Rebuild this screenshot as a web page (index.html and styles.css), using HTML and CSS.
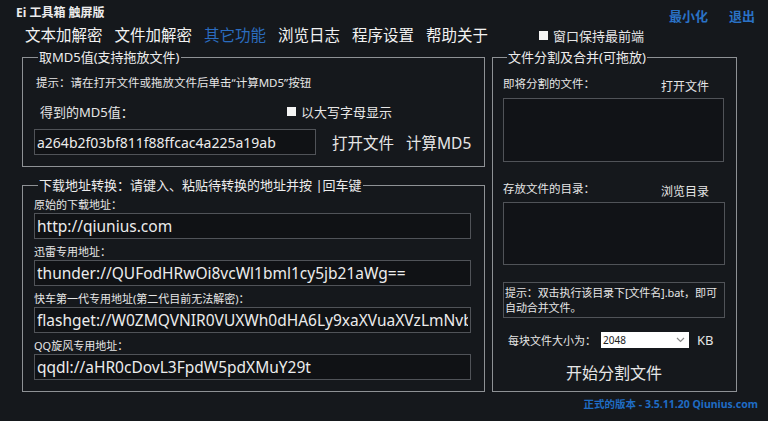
FILE: index.html
```html
<!DOCTYPE html>
<html lang="zh-CN">
<head>
  <meta charset="UTF-8">
  <meta name="viewport" content="width=device-width, initial-scale=1.0">
  <title>Ei 工具箱 触屏版</title>
  <link rel="stylesheet" href="styles.css">
</head>
<body>
  <!-- Title bar -->
  <header class="titlebar">
    <span class="app-title">Ei 工具箱 触屏版</span>
    <div class="win-btns">
      <a href="#">最小化</a>
      <a href="#">退出</a>
    </div>
  </header>

  <!-- Tabs -->
  <nav class="tabs">
    <a href="#" class="tab">文本加解密</a>
    <a href="#" class="tab">文件加解密</a>
    <a href="#" class="tab active">其它功能</a>
    <a href="#" class="tab">浏览日志</a>
    <a href="#" class="tab">程序设置</a>
    <a href="#" class="tab">帮助关于</a>
    <label class="check topmost"><span class="box"></span>窗口保持最前端</label>
  </nav>

  <main class="panes">
    <div class="left-col">
      <!-- MD5 -->
      <fieldset class="group md5-group">
        <legend>取MD5值(支持拖放文件)</legend>
        <p class="hint">提示：请在打开文件或拖放文件后单击“计算MD5”按钮</p>
        <div class="md5-row">
          <span class="md5-label">得到的MD5值：</span>
          <label class="check upper"><span class="box"></span>以大写字母显示</label>
        </div>
        <div class="md5-row">
          <input type="text" class="field md5-field" value="a264b2f03bf811f88ffcac4a225a19ab">
          <button class="text-btn open-btn">打开文件</button>
          <button class="text-btn">计算MD5</button>
        </div>
      </fieldset>

      <!-- Download address -->
      <fieldset class="group url-group">
        <legend>下载地址转换：请键入、粘贴待转换的地址并按 |回车键</legend>
        <label class="url-label">原始的下载地址：</label>
        <input type="text" class="field url-field" value="http://qiunius.com">
        <label class="url-label">迅雷专用地址：</label>
        <input type="text" class="field url-field" value="thunder://QUFodHRwOi8vcWl1bml1cy5jb21aWg==">
        <label class="url-label">快车第一代专用地址(第二代目前无法解密)：</label>
        <input type="text" class="field url-field" value="flashget://W0ZMQVNIR0VUXWh0dHA6Ly9xaXVuaXVzLmNvbVtGTEFTSEdFVF0=">
        <label class="url-label">QQ旋风专用地址：</label>
        <input type="text" class="field url-field" value="qqdl://aHR0cDovL3FpdW5pdXMuY29t">
      </fieldset>
    </div>

    <!-- File split -->
    <fieldset class="group split-group">
      <legend>文件分割及合并(可拖放)</legend>
      <div class="split-row first">
        <span>即将分割的文件：</span>
        <button class="small-btn">打开文件</button>
      </div>
      <div class="drop-box"></div>
      <div class="split-row">
        <span>存放文件的目录：</span>
        <button class="small-btn">浏览目录</button>
      </div>
      <div class="drop-box second"></div>
      <p class="merge-hint">提示：双击执行该目录下[文件名].bat，即可自动合并文件。</p>
      <div class="size-row">
        <span class="size-label">每块文件大小为：</span>
        <div class="select-box">
          <span>2048</span>
          <svg width="9" height="6" viewBox="0 0 9 6"><polyline points="1,1 4.5,4.5 8,1" fill="none" stroke="#888" stroke-width="1.2"/></svg>
        </div>
        <span class="unit">KB</span>
      </div>
      <button class="start-btn">开始分割文件</button>
    </fieldset>
  </main>

  <footer class="version">正式的版本 - 3.5.11.20 Qiunius.com</footer>
</body>
</html>
```

FILE: styles.css
```css
/* Global */
* {
  margin: 0;
  padding: 0;
  box-sizing: border-box;
}

body {
  width: 768px;
  height: 421px;
  overflow: hidden;
  background-color: #15181c;
  color: #e6e6e6;
  font-family: "Noto Sans", "Noto Sans CJK SC", sans-serif;
}

a {
  text-decoration: none;
  color: inherit;
}

button {
  background: none;
  border: none;
  color: #e6e6e6;
  font-family: inherit;
  cursor: pointer;
}

/* Title bar */
.titlebar {
  display: flex;
  justify-content: space-between;
  align-items: flex-start;
  height: 25px;
  padding: 6px 13px 0 16px;
}

.app-title {
  font-size: 12px;
  line-height: 14px;
  font-weight: bold;
  color: #ececec;
}

.win-btns {
  display: flex;
  gap: 21px;
  margin-top: 2px;
}

.win-btns a {
  font-size: 13px;
  line-height: 16px;
  font-weight: bold;
  color: #2a72c6;
}

/* Tabs */
.tabs {
  display: flex;
  align-items: center;
  height: 20px;
  padding-left: 25px;
  gap: 12px;
}

.tab {
  font-size: 15.5px;
  line-height: 20px;
  color: #f2f2f2;
}

.tab.active {
  color: #2b6cbf;
}

.check {
  display: flex;
  align-items: center;
  gap: 5px;
  font-size: 13px;
  color: #e6e6e6;
}

.check .box {
  width: 9px;
  height: 9px;
  background: #f4f4f4;
}

.topmost {
  margin-left: 39px;
}

/* Panes */
.panes {
  display: flex;
  gap: 7px;
  padding-left: 22px;
  margin-top: 4px;
}

.left-col {
  width: 463px;
  display: flex;
  flex-direction: column;
  gap: 10px;
}

.group {
  border: 1px solid #8e9195;
  min-width: 0;
}

.group legend {
  font-size: 13px;
  line-height: 16px;
  margin-left: 4px;
  padding: 0 1px;
  color: #ececec;
}

/* MD5 */
.md5-group {
  padding: 10px 11px 11px 11px;
}

.hint {
  font-size: 11.5px;
  line-height: 15px;
  margin-left: 2px;
}

.md5-row {
  display: flex;
  align-items: center;
  height: 18px;
  margin-top: 12px;
}

.md5-row + .md5-row {
  height: 26px;
  margin-top: 9px;
}

.md5-label {
  width: 247px;
  margin-left: 6px;
  font-size: 13px;
}

.field {
  display: block;
  height: 26px;
  background: #101215;
  border: 1px solid #505358;
  color: #ececec;
  font-family: "Noto Sans", sans-serif;
  padding: 0 2px;
  outline: none;
}

.md5-field {
  width: 282px;
  font-size: 14px;
}

.text-btn {
  font-size: 15.5px;
  margin-left: 12px;
}

.open-btn {
  margin-left: 16px;
}

/* Download address */
.url-group {
  padding: 4px 12px 11px 11px;
}

.url-label {
  display: block;
  font-size: 11px;
  line-height: 16px;
}

.url-field {
  width: 437px;
  font-size: 15.5px;
  margin-bottom: 5px;
}

.url-field:last-child {
  margin-bottom: 0;
}

/* File split */
.split-group {
  width: 245px;
  padding: 10px 11px 0 10px;
}

.split-row {
  display: flex;
  justify-content: space-between;
  align-items: center;
  height: 16px;
  font-size: 11.5px;
  margin-top: 18px;
  padding-right: 16px;
}

.split-row.first {
  margin-top: 0;
}

.small-btn {
  font-size: 12px;
  margin-top: 5px;
}

.drop-box {
  height: 64px;
  margin-top: 7px;
  background: #111317;
  border: 1px solid #505358;
  margin-right: 1px;
}

.drop-box.second {
  height: 63px;
  margin-top: 6px;
  margin-right: 0;
}

.merge-hint {
  height: 36px;
  margin-top: 17px;
  border: 1px solid #505358;
  font-size: 11px;
  line-height: 15px;
  padding: 2px 0 0 1px;
  letter-spacing: -0.1px;
}

.size-row {
  display: flex;
  align-items: center;
  height: 18px;
  margin-top: 13px;
  padding-left: 5px;
  font-size: 11px;
  white-space: nowrap;
}

.size-label {
  width: 93px;
  flex-shrink: 0;
}

.select-box {
  display: flex;
  justify-content: space-between;
  align-items: center;
  flex-shrink: 0;
  width: 88px;
  height: 16px;
  padding: 0 4px 0 2px;
  background: #fff;
  color: #222;
  font-size: 10px;
}

.unit {
  margin-left: 8px;
  font-size: 13px;
}

.start-btn {
  display: block;
  width: 100%;
  margin-top: 13px;
  font-size: 16px;
  line-height: 22px;
  text-align: center;
}

/* Footer */
.version {
  text-align: right;
  padding-right: 10px;
  margin-top: 5px;
  font-size: 10.5px;
  line-height: 14px;
  font-weight: bold;
  color: #1f6cc4;
}
```
